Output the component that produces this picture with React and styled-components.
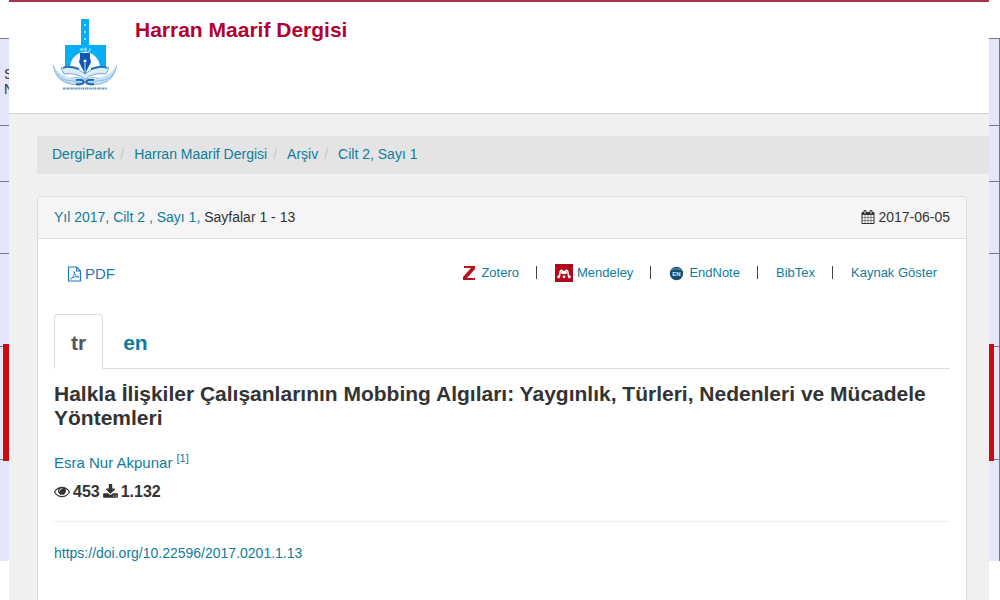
import React, { useState } from "react";
import styled, { createGlobalStyle } from "styled-components";

const GlobalStyle = createGlobalStyle`
  * {
    box-sizing: border-box;
  }
  body {
    margin: 0;
    background: #fff;
    color: #333;
    font-family: "Liberation Sans", Arial, sans-serif;
    font-size: 14px;
    line-height: 20px;
  }
`;

const Layout = styled.div`
  display: grid;
  grid-template-columns: 9px minmax(0, 1fr) 11px;
  height: 100vh;
  overflow: hidden;
`;

// Slices of the table that show on both sides of the article
const Strip = styled.div`
  display: flex;
  flex-direction: column;
  padding-top: 38px;
  overflow: hidden;
`;

const StripCell = styled.div`
  flex: none;
  height: ${(props) => props.$height}px;
  padding: 28px 0 0 4px;
  background: #e6e6fa;
  border-top: 1px solid #77777f;
  border-right: ${(props) => (props.$edge ? "1px solid #77777f" : "none")};
  color: #333;
  font-size: 14px;
  line-height: 15px;
`;

const MarkedCell = styled(StripCell)`
  padding: 0;
  display: flex;
  justify-content: ${(props) => (props.$edge ? "flex-start" : "flex-end")};
`;

const RedBar = styled.div`
  z-index: 1;
  width: ${(props) => props.$width}px;
  margin: -3px 0 -2px;
  background: #cc0a10;
`;

const Page = styled.div`
  display: flex;
  flex-direction: column;
  background: #f0f0f0;
  border-top: 2px solid #a9334d;
`;

const Header = styled.header`
  display: flex;
  gap: 17px;
  height: 112px;
  padding: 16px 44px;
  background: #fff;
  border-bottom: 1px solid #d2d2d2;
`;

const JournalName = styled.h1`
  margin: 0;
  color: #b00334;
  font-size: 21px;
  line-height: 24px;
`;

const Breadcrumb = styled.nav`
  display: flex;
  margin: 22px 0 22px 28px;
  padding: 8px 15px 10px;
  background: #e4e4e4;
`;

const Crumb = styled.span`
  & + &::before {
    content: "/";
    padding: 0 10px 0 6px;
    color: #c8c8c8;
  }
`;

const Link = styled.a`
  color: #0f7c9c;
  text-decoration: none;
  &:hover {
    text-decoration: underline;
  }
`;

const Panel = styled.main`
  flex: 1;
  margin: 0 22px 0 28px;
  background: #fff;
  border: 1px solid #dcdcdc;
  border-bottom: none;
  border-radius: 4px 4px 0 0;
`;

const PanelHeading = styled.div`
  display: flex;
  justify-content: space-between;
  padding: 10px 16px 11px;
  background: #f5f5f5;
  border-bottom: 1px solid #dcdcdc;
  border-radius: 4px 4px 0 0;
`;

const PublishDate = styled.span`
  display: flex;
  align-items: center;
  gap: 3px;
`;

const PanelBody = styled.div`
  padding: 22px 16px;
`;

const Actions = styled.div`
  display: flex;
  justify-content: space-between;
  padding: 0 13px;
`;

const PdfLink = styled(Link)`
  display: flex;
  align-items: center;
  gap: 3px;
  padding-top: 3px;
  color: #2277c0;
  font-size: 15px;
`;

const ExportList = styled.ul`
  display: flex;
  margin: 0;
  padding: 0;
  list-style: none;
  font-size: 13px;
`;

const ExportItem = styled.li`
  display: flex;
  align-items: center;
  & + &::before {
    content: "";
    width: 1px;
    height: 13px;
    margin: 0 18px 0 17px;
    background: #444;
  }
`;

const ExportLink = styled(Link)`
  display: flex;
  align-items: center;
  gap: ${(props) => props.$gap || 0}px;
`;

const Tabs = styled.div`
  display: flex;
  gap: 3px;
  margin-top: 30px;
  border-bottom: 1px solid #dcdcdc;
`;

const Tab = styled.button`
  height: 55px;
  margin-bottom: -1px;
  padding: 3px 16px 0;
  background: ${(props) => (props.$active ? "#fff" : "transparent")};
  border: 1px solid ${(props) => (props.$active ? "#dcdcdc" : "transparent")};
  border-bottom-color: ${(props) => (props.$active ? "#fff" : "transparent")};
  border-radius: 4px 4px 0 0;
  color: ${(props) => (props.$active ? "#555" : "#0f7c9c")};
  cursor: pointer;
  font: bold 21px "Liberation Sans", Arial, sans-serif;
`;

const Title = styled.h2`
  margin: 13px 0 0;
  font-size: 21px;
  line-height: 24px;
`;

const Author = styled.p`
  margin: 22px 0 0;
  font-size: 15px;
  line-height: 22px;
`;

const Note = styled.sup`
  font-size: 11px;
  line-height: 0;
`;

const Stats = styled.div`
  display: flex;
  align-items: center;
  gap: 3px;
  margin-top: 8px;
  font-size: 16px;
  font-weight: bold;
`;

const Divider = styled.hr`
  margin: 19px 0 21px;
  border: none;
  border-top: 1px solid #ececec;
`;

const rows = [
  { height: 87, text: true },
  { height: 56 },
  { height: 72 },
  { height: 93 },
  { height: 113, marked: true },
  { height: 102 },
];

function SideStrip({ right }) {
  return (
    <Strip>
      {rows.map((row, i) =>
        row.marked ? (
          <MarkedCell key={i} $height={row.height} $edge={right}>
            <RedBar $width={right ? 5 : 6} />
          </MarkedCell>
        ) : (
          <StripCell key={i} $height={row.height} $edge={right}>
            {row.text && !right && (
              <>
                S<br />N
              </>
            )}
          </StripCell>
        )
      )}
    </Strip>
  );
}

function Logo() {
  return (
    <svg width="65" height="74" viewBox="0 0 65 74" role="img" aria-label="Harran Maarif Dergisi">
      <path d="M28 1h8v26h17v22H12V27h16z" fill="#06aef5" />
      <path d="M17 50a15 16 0 0 1 30 0z" fill="#fff" />
      <g fill="#c9efff">
        <circle cx="32" cy="7" r="1" />
        <circle cx="32" cy="14" r="1" />
        <circle cx="32" cy="21" r="1" />
      </g>
      <path d="M28 30v3M28 31.500h2M30 30v3M32 30h2M32 31.500h2M32 33h2M32 30v3M37 30v3h-2" stroke="#a5e2fc" fill="none" />
      <path d="M0 47q2 20 22 20h8q3-4-4-6Q7 60 0 47z" fill="#c9e0f3" />
      <path d="M64 47q-2 20-22 20h-8q-3-4 4-6 19-1 26-14z" fill="#c9e0f3" />
      <path d="M8 50q14-3 24 6 10-9 24-6l-3 6q-12-2-21 5-9-7-21-5z" fill="#dcedf9" stroke="#6ba6d8" />
      <path d="M10 50q5-3 16 1M54 50q-5-3-16 1" fill="none" stroke="#2672bd" strokeWidth="2" />
      <path
        d="M0 47q3 16 20 16l9 2M64 47q-3 16-20 16l-9 2M3 55q6 12 24 12M61 55q-6 12-24 12"
        fill="none"
        stroke="#8dbde4"
      />
      <path d="M18 60q8-2 14 2 6-4 14-2" fill="none" stroke="#8dbde4" />
      <path d="M23 62q7-1 8 2-1 3-8 2M41 62q-7-1-8 2 1 3 8 2" fill="none" stroke="#1869b5" strokeWidth="2" />
      <path d="M27 35h10v5l1 4-6 12-6-12 1-4z" fill="#1057b5" />
      <path d="M32 54v-9" stroke="#cfe5fa" />
      <circle cx="32" cy="43" r="1.500" fill="#fff" />
      <path d="M10 70.500h44" stroke="#6e9ac0" strokeWidth="2" strokeDasharray="2 .5 1 .4" />
    </svg>
  );
}

function CalendarIcon() {
  return (
    <svg width="14" height="14" viewBox="64 0 1664 1792" fill="#333" aria-hidden="true">
      <path d="M192 1664h288v-288h-288v288zm352 0h320v-288h-320v288zm-352-352h288v-320h-288v320zm352 0h320v-320h-320v320zm-352-384h288v-288h-288v288zm736 736h320v-288h-320v288zm-384-736h320v-288h-320v288zm768 736h288v-288h-288v288zm-384-352h320v-320h-320v320zm-352-864v-288q0-13-9.500-22.500t-22.500-9.500h-64q-13 0-22.500 9.500t-9.500 22.500v288q0 13 9.500 22.500t22.500 9.500h64q13 0 22.500-9.500t9.500-22.500zm736 864h288v-320h-288v320zm-384-384h320v-288h-320v288zm384 0h288v-288h-288v288zm32-480v-288q0-13-9.500-22.500t-22.500-9.500h-64q-13 0-22.500 9.500t-9.500 22.500v288q0 13 9.500 22.500t22.500 9.500h64q13 0 22.500-9.500t9.500-22.500zm384-64v1280q0 52-38 90t-90 38h-1408q-52 0-90-38t-38-90v-1280q0-52 38-90t90-38h128v-96q0-66 47-113t113-47h64q66 0 113 47t47 113v96h384v-96q0-66 47-113t113-47h64q66 0 113 47t47 113v96h128q52 0 90 38t38 90z" />
    </svg>
  );
}

function PdfIcon() {
  return (
    <svg width="15" height="16" viewBox="0 0 15 16" fill="none" stroke="#2277c0" aria-hidden="true">
      <path d="M1.500 1h8l4 4v10h-12zM9.500 1v4h4" strokeWidth="1.200" />
      <path d="M7 5.500c1 3 2 5.500 5 5.500-3-1-6 0-8.500 2.300C6 11.500 8 8 7 5.500z" strokeWidth=".9" />
    </svg>
  );
}

function EyeIcon() {
  return (
    <svg width="16" height="16" viewBox="0 64 1792 1792" fill="#333" aria-hidden="true">
      <path d="M1664 960q-152-236-381-353 61 104 61 225 0 185-131.500 316.500t-316.500 131.500-316.500-131.500-131.500-316.500q0-121 61-225-229 117-381 353 133 205 333.500 326.500t434.500 121.500 434.500-121.500 333.500-326.500zm-720-384q0-20-14-34t-34-14q-125 0-214.500 89.500t-89.500 214.500q0 20 14 34t34 14 34-14 14-34q0-86 61-147t147-61q20 0 34-14t14-34zm848 384q0 34-20 69-140 230-376.500 368.500t-499.500 138.500-499.500-139-376.500-368q-20-35-20-69t20-69q140-229 376.500-368t499.500-139 499.500 139 376.500 368q20 35 20 69z" />
    </svg>
  );
}

function DownloadIcon() {
  return (
    <svg width="15" height="16" viewBox="64 0 1664 1792" fill="#333" aria-hidden="true">
      <path d="M1344 1344q0-26-19-45t-45-19-45 19-19 45 19 45 45 19 45-19 19-45zm256 0q0-26-19-45t-45-19-45 19-19 45 19 45 45 19 45-19 19-45zm128-224v320q0 40-28 68t-68 28h-1472q-40 0-68-28t-28-68v-320q0-40 28-68t68-28h465l135 136q58 56 136 56t136-56l136-136h464q40 0 68 28t28 68zm-325-569q17 41-14 70l-448 448q-18 19-45 19t-45-19l-448-448q-31-29-14-70 17-39 59-39h256v-448q0-26 19-45t45-19h256q26 0 45 19t19 45v448h256q42 0 59 39z" />
    </svg>
  );
}

function ZoteroIcon() {
  return (
    <svg width="13" height="17" viewBox="0 0 13 17" aria-hidden="true">
      <path d="M1 2h11v3L4 14h8v2H0v-3L8 4H1z" fill="#b8101c" />
    </svg>
  );
}

function MendeleyIcon() {
  return (
    <svg width="18" height="18" viewBox="0 0 18 18" aria-hidden="true">
      <path d="M0 0h18v18H0z" fill="#b3091c" />
      <g fill="#fff">
        <circle cx="9" cy="8.500" r="1.700" />
        <circle cx="3.700" cy="12.800" r="1.500" />
        <circle cx="9" cy="12.800" r="1.400" />
        <circle cx="14.300" cy="12.800" r="1.500" />
      </g>
      <path d="M3.900 12.500c2-1.500 0-5 2-6s2 2 3.100 2 1.100-3 3.100-2 0 4.500 2 6M6.500 7.500l1 2.500M11.500 7.500l-1 2.500" fill="none" stroke="#fff" strokeWidth="1.500" />
    </svg>
  );
}

function EndNoteIcon() {
  return (
    <svg width="15" height="16" viewBox="0 0 15 16" aria-hidden="true">
      <circle cx="7.500" cy="8.500" r="6.700" fill="#12506f" />
      <path d="M2 6a6 5 0 0 1 11 0q-6-3-11 0z" fill="#427f9d" />
      <text x="7.500" y="11" fill="#dcecf4" fontSize="6" fontWeight="bold" textAnchor="middle">
        EN
      </text>
    </svg>
  );
}

const crumbs = ["DergiPark", "Harran Maarif Dergisi", "Arşiv", "Cilt 2, Sayı 1"];

const exportLinks = [
  { label: "Zotero", icon: <ZoteroIcon />, gap: 5 },
  { label: "Mendeley", icon: <MendeleyIcon />, gap: 4 },
  { label: "EndNote", icon: <EndNoteIcon />, gap: 5 },
  { label: "BibTex" },
  { label: "Kaynak Göster" },
];

function App() {
  const [lang, setLang] = useState("tr");

  return (
    <Layout>
      <GlobalStyle />
      <SideStrip />
      <Page>
        <Header>
          <Logo />
          <JournalName>Harran Maarif Dergisi</JournalName>
        </Header>
        <Breadcrumb>
          {crumbs.map((crumb) => (
            <Crumb key={crumb}>
              <Link href="#">{crumb}</Link>
            </Crumb>
          ))}
        </Breadcrumb>
        <Panel>
          <PanelHeading>
            <span>
              <Link href="#">Yıl 2017, Cilt 2 , Sayı 1,</Link> Sayfalar 1 - 13
            </span>
            <PublishDate>
              <CalendarIcon />
              2017-06-05
            </PublishDate>
          </PanelHeading>
          <PanelBody>
            <Actions>
              <PdfLink href="#">
                <PdfIcon />
                PDF
              </PdfLink>
              <ExportList>
                {exportLinks.map((item) => (
                  <ExportItem key={item.label}>
                    <ExportLink href="#" $gap={item.gap}>
                      {item.icon}
                      {item.label}
                    </ExportLink>
                  </ExportItem>
                ))}
              </ExportList>
            </Actions>
            <Tabs role="tablist">
              {["tr", "en"].map((code) => (
                <Tab
                  key={code}
                  role="tab"
                  aria-selected={lang === code}
                  $active={lang === code}
                  onClick={() => setLang(code)}
                >
                  {code}
                </Tab>
              ))}
            </Tabs>
            <Title>
              Halkla İlişkiler Çalışanlarının Mobbing Algıları: Yaygınlık, Türleri, Nedenleri ve Mücadele Yöntemleri
            </Title>
            <Author>
              <Link href="#">
                Esra Nur Akpunar <Note>[1]</Note>
              </Link>
            </Author>
            <Stats>
              <EyeIcon />
              453
              <DownloadIcon />
              1.132
            </Stats>
            <Divider />
            <Link href="#">https://doi.org/10.22596/2017.0201.1.13</Link>
          </PanelBody>
        </Panel>
      </Page>
      <SideStrip right />
    </Layout>
  );
}

export default App;
